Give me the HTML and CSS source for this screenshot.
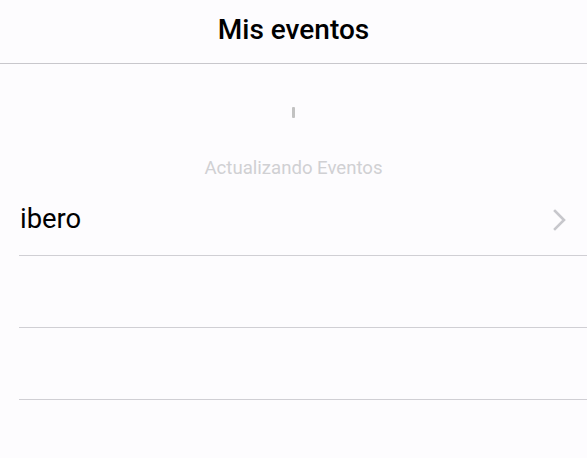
FILE: index.html
```html
<!DOCTYPE html>
<html lang="es">
<head>
<meta charset="utf-8">
<title>Mis eventos</title>
<link rel="stylesheet" href="styles.css">
</head>
<body>
<header class="navbar">
  <h1 class="title">Mis eventos</h1>
</header>
<div class="refresh">
  <span class="spinner"></span>
  <span class="refresh-text">Actualizando Eventos</span>
</div>
<ul class="list">
  <li class="row">
    <span class="row-label">ibero</span>
    <svg class="chevron" width="14" height="22" viewBox="0 0 14 22"><path d="M2 2 L11 11 L2 20" fill="none" stroke="#c7c7cc" stroke-width="2.6" stroke-linecap="square"/></svg>
  </li>
  <li class="row"></li>
  <li class="row"></li>
  <li class="row"></li>
</ul>
</body>
</html>
```
FILE: styles.css
```css
html, body {
  margin: 0;
  padding: 0;
  background: #fdfcfe;
  font-family: Roboto, "Liberation Sans", sans-serif;
  height: 100%;
  overflow: hidden;
}
.navbar {
  height: 63px;
  border-bottom: 1px solid #c8c7cc;
  display: flex;
  align-items: center;
  justify-content: center;
}
.title {
  margin: 0;
  font-size: 28px;
  font-weight: 500;
  color: #000;
  padding-bottom: 4px;
}
.refresh {
  height: 120px;
  display: flex;
  flex-direction: column;
  align-items: center;
}
.spinner {
  width: 3px;
  height: 11px;
  background: #c2c2c2;
  border-radius: 1px;
  margin-top: 43px;
}
.refresh-text {
  margin-top: 39px;
  font-size: 18.6px;
  color: #d0d0d3;
}
.list {
  list-style: none;
  margin: 0;
  padding: 0 0 0 19px;
}
.row {
  height: 71px;
  border-bottom: 1px solid #d0cfd4;
  display: flex;
  align-items: center;
  justify-content: space-between;
  padding-right: 20px;
}
.row:last-child {
  border-bottom: none;
}
.row-label {
  font-size: 27.4px;
  color: #000;
  padding-bottom: 2px;
  padding-left: 1px;
}
.chevron {
  display: block;
}
```
